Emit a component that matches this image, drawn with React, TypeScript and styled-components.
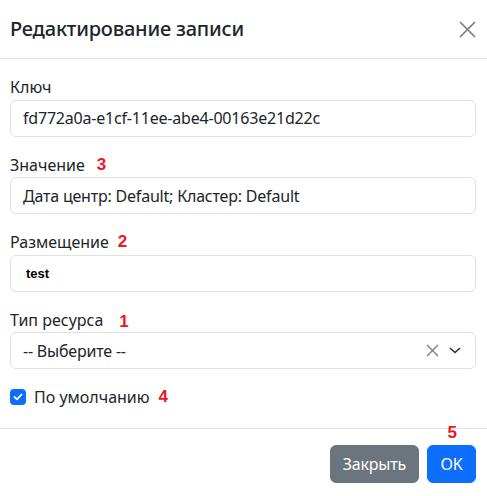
import styled, { createGlobalStyle } from "styled-components"

const GlobalStyle = createGlobalStyle`
  * { box-sizing: border-box; }
  body {
    margin: 0;
    background: #fff;
    font-family: "Noto Sans", "Open Sans", sans-serif;
    color: #212529;
  }
`

const Modal = styled.div`
  width: 487px;
  background: #fff;
`

const Header = styled.div`
  height: 59px;
  display: flex;
  align-items: center;
  justify-content: space-between;
  padding: 0 11px 0 10px;
  border-bottom: 1px solid #dee2e6;
`

const Title = styled.h5`
  margin: 0;
  font-size: 20px;
  font-weight: 500;
  line-height: 24px;
  letter-spacing: -0.2px;
`

const CloseButton = styled.button`
  width: 17px;
  height: 17px;
  padding: 0;
  border: 0;
  background: transparent;
  display: flex;
  margin-top: 1px;
  cursor: pointer;
`

const Body = styled.div`
  padding: 16px 11px 19px 10px;
`

const Field = styled.div`
  margin-bottom: 16px;
`

const Label = styled.label`
  display: flex;
  align-items: center;
  height: 24px;
  margin-bottom: 0.5px;
  font-size: 16px;
  line-height: 24px;
`

const Mark = styled.span<{ $gap: number; $shift?: number }>`
  margin-left: ${(p) => p.$gap}px;
  position: relative;
  top: ${(p) => p.$shift ?? 0}px;
  font-family: "Liberation Sans", Arial, sans-serif;
  font-weight: 700;
  font-size: 17px;
  color: #f0141e;
`

const InputBox = styled.div`
  height: 37px;
  display: flex;
  align-items: center;
  padding: 0 12px;
  border: 1px solid #dee2e6;
  border-radius: 6px;
  font-size: 16px;
  color: #212529;
  letter-spacing: -0.2px;
`

const RawValue = styled.span`
  margin-left: 3px;
  font-family: "Liberation Sans", Arial, sans-serif;
  font-weight: 700;
  font-size: 13px;
  color: #000;
  letter-spacing: 0;
`

const SelectBox = styled(InputBox)`
  justify-content: space-between;
  padding-right: 14px;
`

const SelectIcons = styled.div`
  display: flex;
  align-items: center;
  gap: 10px;
`

const CheckRow = styled.div`
  display: flex;
  align-items: center;
  height: 24px;
  margin-top: 1px;
  font-size: 16px;
`

const CheckBox = styled.span`
  width: 16px;
  height: 16px;
  border-radius: 4px;
  background: #0d6efd;
  display: flex;
  align-items: center;
  justify-content: center;
  margin-right: 8px;
`

const Footer = styled.div`
  position: relative;
  border-top: 1px solid #dee2e6;
  padding: 16px 11px 12px;
  display: flex;
  justify-content: flex-end;
  gap: 8px;
`

const Button = styled.button<{ $variant: "primary" | "secondary" }>`
  height: 37.5px;
  padding: 0 12px;
  border: 1px solid ${(p) => (p.$variant === "primary" ? "#0d6efd" : "#6c757d")};
  background: ${(p) => (p.$variant === "primary" ? "#0d6efd" : "#6c757d")};
  color: #fff;
  border-radius: 6px;
  font-family: inherit;
  font-size: 16px;
  letter-spacing: -0.2px;
  min-width: ${(p) => (p.$variant === "primary" ? "49px" : "89px")};
`

const FooterMark = styled(Mark)`
  position: absolute;
  top: -6px;
  right: 30px;
  margin: 0;
`

export default function App() {
  return (
    <Modal>
      <GlobalStyle />
      <Header>
        <Title>Редактирование записи</Title>
        <CloseButton aria-label="Закрыть">
          <svg width="17" height="17" viewBox="0 0 17 17">
            <path d="M1 1 L16 16 M16 1 L1 16" stroke="#7d7d7d" strokeWidth="1.7" fill="none" />
          </svg>
        </CloseButton>
      </Header>
      <Body>
        <Field>
          <Label>Ключ</Label>
          <InputBox>fd772a0a-e1cf-11ee-abe4-00163e21d22c</InputBox>
        </Field>
        <Field>
          <Label>
            Значение<Mark $gap={12}>3</Mark>
          </Label>
          <InputBox>Дата центр: Default; Кластер: Default</InputBox>
        </Field>
        <Field>
          <Label>
            Размещение<Mark $gap={9}>2</Mark>
          </Label>
          <InputBox>
            <RawValue>test</RawValue>
          </InputBox>
        </Field>
        <Field>
          <Label>
            Тип ресурса<Mark $gap={16} $shift={2}>1</Mark>
          </Label>
          <SelectBox>
            <span>-- Выберите --</span>
            <SelectIcons>
              <svg width="13" height="13" viewBox="0 0 13 13">
                <path d="M1 1 L12 12 M12 1 L1 12" stroke="#7a7a7a" strokeWidth="1.3" fill="none" />
              </svg>
              <svg width="12" height="7" viewBox="0 0 12 7">
                <path d="M1 1 L6 5.5 L11 1" stroke="#333" strokeWidth="1.6" fill="none" />
              </svg>
            </SelectIcons>
          </SelectBox>
        </Field>
        <CheckRow>
          <CheckBox>
            <svg width="10" height="8" viewBox="0 0 10 8">
              <path d="M1.5 4 L4 6.3 L8.5 1.5" stroke="#fff" strokeWidth="1.8" fill="none" strokeLinecap="round" strokeLinejoin="round" />
            </svg>
          </CheckBox>
          По умолчанию<Mark $gap={9}>4</Mark>
        </CheckRow>
      </Body>
      <Footer>
        <FooterMark $gap={0}>5</FooterMark>
        <Button $variant="secondary">Закрыть</Button>
        <Button $variant="primary">OK</Button>
      </Footer>
    </Modal>
  )
}
